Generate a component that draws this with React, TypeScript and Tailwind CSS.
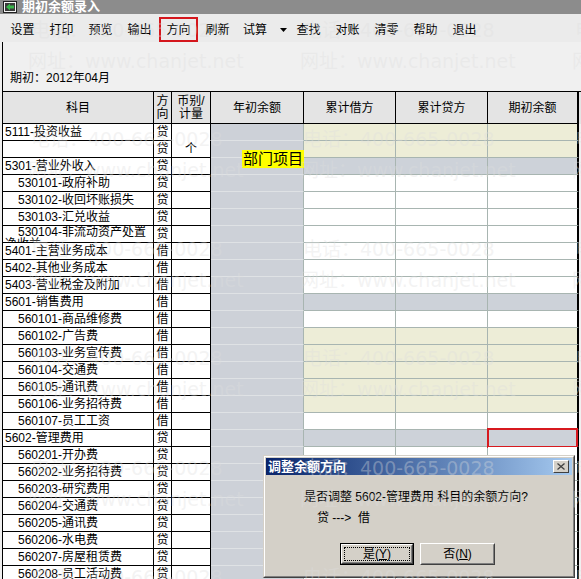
import React from 'react';

type Row = {
  name: string;
  lvl: 0 | 1;
  dir: string;
  unit?: string;
  c: 'y' | 'g' | 'w';
  wrap?: string;
  red?: boolean;
  openUnit?: boolean;
};

const rows: Row[] = [
  { name: '5111-投资收益', lvl: 0, dir: '贷', c: 'y', openUnit: true },
  { name: '', lvl: 0, dir: '贷', unit: '个', c: 'y' },
  { name: '5301-营业外收入', lvl: 0, dir: '贷', c: 'g' },
  { name: '530101-政府补助', lvl: 1, dir: '贷', c: 'w' },
  { name: '530102-收回坏账损失', lvl: 1, dir: '贷', c: 'w' },
  { name: '530103-汇兑收益', lvl: 1, dir: '贷', c: 'w' },
  { name: '530104-非流动资产处置', lvl: 1, dir: '贷', c: 'w', wrap: '净收益' },
  { name: '5401-主营业务成本', lvl: 0, dir: '借', c: 'w' },
  { name: '5402-其他业务成本', lvl: 0, dir: '借', c: 'w' },
  { name: '5403-营业税金及附加', lvl: 0, dir: '借', c: 'w' },
  { name: '5601-销售费用', lvl: 0, dir: '借', c: 'g' },
  { name: '560101-商品维修费', lvl: 1, dir: '借', c: 'w' },
  { name: '560102-广告费', lvl: 1, dir: '借', c: 'y' },
  { name: '560103-业务宣传费', lvl: 1, dir: '借', c: 'y' },
  { name: '560104-交通费', lvl: 1, dir: '借', c: 'y' },
  { name: '560105-通讯费', lvl: 1, dir: '借', c: 'y' },
  { name: '560106-业务招待费', lvl: 1, dir: '借', c: 'y' },
  { name: '560107-员工工资', lvl: 1, dir: '借', c: 'w' },
  { name: '5602-管理费用', lvl: 0, dir: '贷', c: 'g', red: true },
  { name: '560201-开办费', lvl: 1, dir: '贷', c: 'w' },
  { name: '560202-业务招待费', lvl: 1, dir: '贷', c: 'w' },
  { name: '560203-研究费用', lvl: 1, dir: '贷', c: 'w' },
  { name: '560204-交通费', lvl: 1, dir: '贷', c: 'w' },
  { name: '560205-通讯费', lvl: 1, dir: '贷', c: 'w' },
  { name: '560206-水电费', lvl: 1, dir: '贷', c: 'w' },
  { name: '560207-房屋租赁费', lvl: 1, dir: '贷', c: 'w' },
  { name: '560208-员工活动费', lvl: 1, dir: '贷', c: 'w' },
];

const dataBg: Record<Row['c'], string> = {
  y: 'bg-[#ededd7]',
  g: 'bg-[#cdd2d9]',
  w: 'bg-white',
};

const tools = ['设置', '打印', '预览', '输出', '方向', '刷新'];
const tools2 = ['查找', '对账', '清零', '帮助', '退出'];

function TitleIcon() {
  return (
    <svg width="14" height="12" viewBox="0 0 14 12">
      <rect x="0.5" y="0.5" width="13" height="11" fill="#f4f4f4" stroke="#202020" />
      <rect x="2" y="2" width="10" height="8" fill="#3a3a3a" />
      <path d="M3 6 L7 2.5 L7 4.5 L11 4.5 L11 7.5 L7 7.5 L7 9.5 Z" fill="#39b54a" />
    </svg>
  );
}

function Watermark() {
  const cells = Array.from({ length: 18 }, (_, i) => i);
  return (
    <div className="pointer-events-none absolute left-[31px] top-[15px] grid grid-cols-[repeat(3,272px)] auto-rows-[109.4px] font-['DejaVu_Sans','Noto_Sans_CJK_SC',sans-serif] text-[19px] leading-[31px] text-[rgba(222,222,222,0.36)]">
      {cells.map((i) => (
        <div key={i} className="whitespace-nowrap">
          <div>电话：400-665-0028</div>
          <div className="-ml-[3px]">网址：www.chanjet.net</div>
        </div>
      ))}
    </div>
  );
}

function TableRow({ r }: { r: Row }) {
  return (
    <div className="flex h-[17px]">
      <div className="w-[151px] shrink-0 overflow-hidden border-r border-b border-r-black border-b-black bg-white">
        {r.wrap ? (
          <div className="leading-[12px]">
            <div className="whitespace-nowrap pl-[15px]">{r.name}</div>
            <div className="pl-[2px]">{r.wrap}</div>
          </div>
        ) : (
          <div className={`whitespace-nowrap leading-[16px] ${r.lvl ? 'pl-[15px]' : 'pl-[2px]'}`}>{r.name}</div>
        )}
      </div>
      <div className="w-[18px] shrink-0 border-r border-b border-r-black border-b-black bg-white text-center leading-[16px]">
        {r.dir}
      </div>
      <div
        className={`w-[39px] shrink-0 border-r border-b border-r-black bg-white text-center leading-[16px] ${
          r.openUnit ? 'border-b-white' : 'border-b-black'
        }`}
      >
        {r.unit}
      </div>
      <div className="w-[93px] shrink-0 border-r border-b border-r-[#a8b5b1] border-b-[#dfe2e5] bg-[#cdd1d8]" />
      <div className={`w-[92px] shrink-0 border-r border-b border-r-[#a8b5b1] border-b-[#a8b5b1] ${dataBg[r.c]}`} />
      <div className={`w-[92px] shrink-0 border-r border-b border-r-[#a8b5b1] border-b-[#a8b5b1] ${dataBg[r.c]}`} />
      <div className={`relative w-[91px] shrink-0 border-r-2 border-b border-r-black border-b-[#a8b5b1] ${dataBg[r.c]}`}>
        {r.red && <div className="absolute left-[-1px] top-[-2px] h-[20px] w-[91px] border-2 border-[#d7191f]" />}
      </div>
    </div>
  );
}

function WinButton({ children, def }: { children: React.ReactNode; def?: boolean }) {
  if (def) {
    return (
      <div className="h-[22px] w-[74px] border border-black">
        <div className="h-full w-full border border-t-white border-l-white border-r-[#404040] border-b-[#404040]">
          <div className="flex h-full w-full items-center justify-center border border-t-[#d4d0c8] border-l-[#d4d0c8] border-r-[#808080] border-b-[#808080] p-[1px]">
            <div className="flex h-full w-full items-center justify-center border border-dotted border-black leading-[12px]">
              {children}
            </div>
          </div>
        </div>
      </div>
    );
  }
  return (
    <div className="h-[22px] w-[75px] border border-t-white border-l-white border-r-[#404040] border-b-[#404040]">
      <div className="flex h-full w-full items-center justify-center border border-t-[#d4d0c8] border-l-[#d4d0c8] border-r-[#808080] border-b-[#808080] leading-[12px]">
        {children}
      </div>
    </div>
  );
}

export default function App() {
  return (
    <div className="relative h-[579px] w-[581px] overflow-hidden bg-[#f0f0f0] font-['Liberation_Sans','Noto_Sans_CJK_SC',sans-serif] text-[12px] text-black">
      {/* title bar */}
      <div className="flex h-[14px] items-center gap-[5px] bg-[#8c8c8c] pl-[3px]">
        <TitleIcon />
        <span className="text-[13px] font-bold leading-[14px] text-white">期初余额录入</span>
      </div>

      {/* toolbar */}
      <div className="flex h-[28px] bg-[#ebebeb] pl-[3px] pt-[3px]">
        {tools.map((t) => (
          <div
            key={t}
            className={`flex h-[25px] w-[39px] items-center justify-center ${t === '方向' ? 'border-2 border-[#d4161c]' : ''}`}
          >
            {t}
          </div>
        ))}
        <div className="flex h-[25px] w-[52px] items-center pl-[6px]">
          <span>试算</span>
          <svg className="ml-[13px]" width="7" height="4" viewBox="0 0 7 4">
            <path d="M0 0 H7 L3.5 4 Z" fill="#000" />
          </svg>
        </div>
        {tools2.map((t) => (
          <div key={t} className="flex h-[25px] w-[39px] items-center justify-center">
            {t}
          </div>
        ))}
      </div>

      {/* content with left border */}
      <div className="ml-[2px] border-l border-black">
        <div className="h-[49px] pl-[7px] pt-[29px] leading-[14px]">期初：2012年04月</div>

        <div className="border-t border-black">
          {/* header */}
          <div className="flex h-[32px] bg-[#e4e4e4]">
            <div className="flex w-[151px] shrink-0 items-center justify-center border-r border-b border-black">科目</div>
            <div className="flex w-[18px] shrink-0 flex-col items-center justify-center border-r border-b border-black leading-[13px]">
              <span>方</span>
              <span>向</span>
            </div>
            <div className="flex w-[39px] shrink-0 flex-col items-center justify-center border-r border-b border-black leading-[13px]">
              <span>币别/</span>
              <span>计量</span>
            </div>
            <div className="flex w-[93px] shrink-0 items-center justify-center border-r border-b border-black">年初余额</div>
            <div className="flex w-[92px] shrink-0 items-center justify-center border-r border-b border-black">累计借方</div>
            <div className="flex w-[92px] shrink-0 items-center justify-center border-r border-b border-black">累计贷方</div>
            <div className="flex w-[91px] shrink-0 items-center justify-center border-r-2 border-b border-black">期初余额</div>
          </div>
          {rows.map((r, i) => (
            <TableRow key={i} r={r} />
          ))}
        </div>
      </div>

      {/* highlighted label */}
      <div className="absolute left-[242px] top-[150px] h-[18px] bg-[#ffff00] px-[1px] text-[15px] leading-[18px]">部门项目</div>

      {/* dialog */}
      <div className="absolute left-[263px] top-[455px] h-[123px] w-[312px] border border-t-[#d4d0c8] border-l-[#d4d0c8] border-r-[#404040] border-b-[#404040] bg-[#d4d0c8]">
        <div className="flex h-full w-full flex-col border border-t-white border-l-white border-r-[#808080] border-b-[#808080] p-[1px]">
          <div className="flex h-[17px] items-center bg-linear-to-r from-[#0a246a] to-[#a6caf0] pl-[2px] pr-[3px]">
            <span className="flex-1 text-[13px] font-bold leading-[14px] text-white">调整余额方向</span>
            <div className="flex h-[13px] w-[16px] items-center justify-center border border-t-white border-l-white border-r-[#404040] border-b-[#404040] bg-[#d4d0c8]">
              <svg width="8" height="7" viewBox="0 0 8 7">
                <path d="M0.5 0.5 L7.5 6.5 M7.5 0.5 L0.5 6.5" stroke="#404040" strokeWidth="1.3" />
              </svg>
            </div>
          </div>
          <div className="pl-[38px] pt-[15px] leading-[14px]">是否调整 5602-管理费用 科目的余额方向?</div>
          <div className="mt-[7px] pl-[51px] leading-[14px] whitespace-pre">贷 ---&gt;  借</div>
          <div className="mt-[18px] flex gap-[6px] pl-[74px]">
            <WinButton def>
              <span>
                是(<span className="underline">Y</span>)
              </span>
            </WinButton>
            <WinButton>
              <span>
                否(<span className="underline">N</span>)
              </span>
            </WinButton>
          </div>
        </div>
      </div>

      <Watermark />
    </div>
  );
}
